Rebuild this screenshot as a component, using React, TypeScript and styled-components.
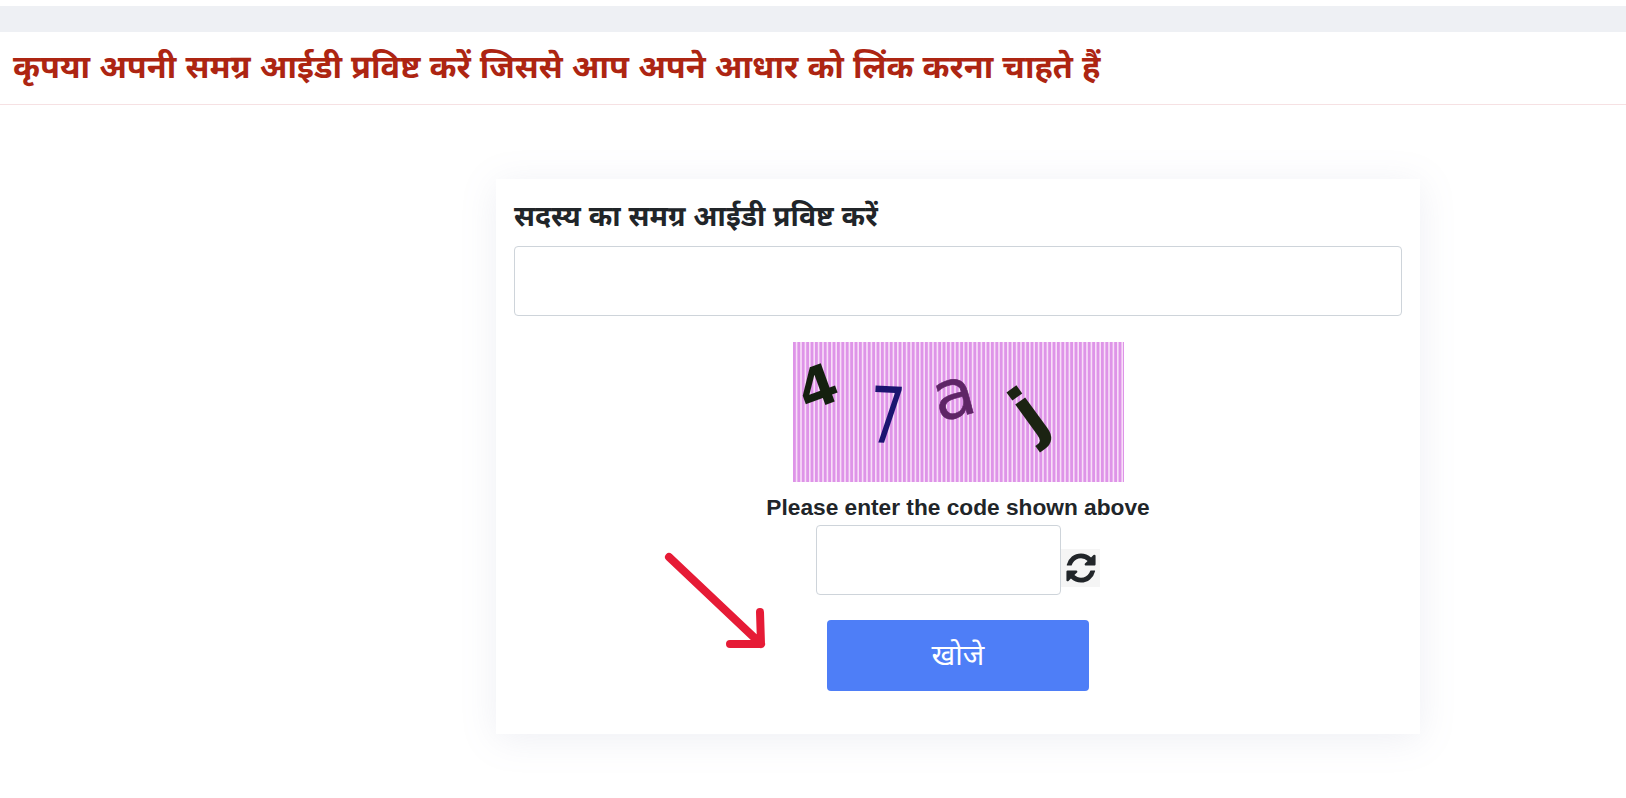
import React from 'react';
import styled, { createGlobalStyle } from 'styled-components';

const GlobalStyle = createGlobalStyle`
  html, body {
    margin: 0;
    padding: 0;
    background: #ffffff;
    font-family: "Liberation Sans", Arial, sans-serif;
  }
  * { box-sizing: border-box; }
`;

const hindi = `"Liberation Sans", "Noto Sans Devanagari", "Lohit Devanagari", "Noto Sans", sans-serif`;

const Page = styled.div`
  width: 1626px;
  height: 798px;
  overflow: hidden;
  padding-top: 6px;
`;

const TopBand = styled.div`
  height: 26px;
  background: #eef0f4;
`;

const TitleBar = styled.div`
  height: 73px;
  padding: 14px 13px 0;
  border-bottom: 1px solid #f6e1e3;
`;

const Title = styled.h1`
  margin: 0;
  font-family: ${hindi};
  font-size: 32.5px;
  line-height: 42px;
  font-weight: 700;
  color: #ad2512;
`;

const Card = styled.div`
  width: 924px;
  height: 555px;
  margin: 74px 0 0 496px;
  padding: 19px 18px 0;
  background: #fff;
  box-shadow: 0 5px 35px rgba(120, 130, 170, 0.13);
  display: flex;
  flex-direction: column;
`;

const FieldLabel = styled.label`
  font-family: ${hindi};
  font-size: 28.4px;
  line-height: 36px;
  font-weight: 700;
  color: #212529;
  margin-bottom: 12px;
`;

const TextBox = styled.input<{ $width?: number }>`
  display: block;
  width: ${(p) => (p.$width ? `${p.$width}px` : '100%')};
  height: 70px;
  border: 1px solid #ced4da;
  border-radius: 4px;
  background: #fff;
  outline: none;
`;

const CaptchaArea = styled.div`
  margin-top: 26px;
  display: flex;
  flex-direction: column;
  align-items: center;
`;

const CaptchaImage = styled.svg`
  display: block;
  width: 331px;
  height: 140px;
`;

const CaptchaHint = styled.div`
  margin-top: 12px;
  font-size: 22.7px;
  line-height: 26px;
  font-weight: 700;
  color: #212529;
`;

const CaptchaRow = styled.div`
  display: flex;
  align-items: flex-end;
  margin-top: 5px;
`;

const RefreshButton = styled.div`
  width: 39px;
  height: 38px;
  margin-bottom: 8px;
  background: #f5f5f5;
  display: flex;
  align-items: center;
  justify-content: center;
  color: #212529;
`;

const ButtonRow = styled.div`
  position: relative;
  margin-top: 25px;
  display: flex;
  justify-content: center;
`;

const SearchButton = styled.button`
  width: 262px;
  height: 71px;
  padding: 5px 0 0;
  border: 0;
  border-radius: 4px;
  background: #4e7ef7;
  color: #fff;
  font-family: ${hindi};
  font-size: 29px;
`;

const Arrow = styled.svg`
  position: absolute;
  left: 146px;
  top: -70px;
  width: 110px;
  height: 110px;
`;

const RefreshIcon = () => (
  <svg width="34" height="34" viewBox="0 0 1792 1792" fill="currentColor">
    <path d="M1639 1056q0 5-1 7-64 268-268 434.5t-478 166.5q-146 0-282.5-55t-243.5-157l-129 129q-19 19-45 19t-45-19-19-45v-448q0-26 19-45t45-19h448q26 0 45 19t19 45-19 45l-137 137q71 66 161 102t187 36q134 0 250-65t186-179q11-17 53-117 8-23 30-23h192q13 0 22.5 9.5t9.5 22.5zm25-800v448q0 26-19 45t-45 19h-448q-26 0-45-19t-19-45 19-45l138-138q-148-137-349-137-134 0-250 65t-186 179q-11 17-53 117-8 23-30 23h-199q-13 0-22.5-9.5t-9.5-22.5v-7q65-268 270-434.5t480-166.5q146 0 284 55.5t245 156.5l130-129q19-19 45-19t45 19 19 45z" />
  </svg>
);

export default function App() {
  const stripes = Array.from({ length: 76 }, (_, i) => i * 4.4);
  return (
    <Page>
      <GlobalStyle />
      <TopBand />
      <TitleBar>
        <Title>कृपया अपनी समग्र आईडी प्रविष्ट करें जिससे आप अपने आधार को लिंक करना चाहते हैं</Title>
      </TitleBar>
      <Card>
        <FieldLabel>सदस्य का समग्र आईडी प्रविष्ट करें</FieldLabel>
        <TextBox />
        <CaptchaArea>
          <CaptchaImage viewBox="0 0 331 140">
            <rect width="331" height="140" fill="#f8def8" />
            {stripes.map((x) => (
              <rect key={x} x={x} width="2.8" height="140" fill="#de94e8" />
            ))}
            <text fontFamily="DejaVu Sans" fontWeight="700" fontSize="56" fill="#14200f" transform="translate(13 70) rotate(-20)">4</text>
            <text fontFamily="DejaVu Sans" fontSize="78" fill="#1b1470" transform="translate(75 100) rotate(3) scale(0.72 1)">7</text>
            <text fontFamily="DejaVu Sans" fontSize="68" stroke="#5e2566" strokeWidth="0.6" fill="#5e2566" transform="translate(146 80) rotate(-15)">a</text>
            <text fontFamily="DejaVu Sans" fontWeight="700" fontSize="70" fill="#1b2312" transform="translate(240 97) rotate(-36)">j</text>
          </CaptchaImage>
          <CaptchaHint>Please enter the code shown above</CaptchaHint>
          <CaptchaRow>
            <TextBox $width={245} />
            <RefreshButton>
              <RefreshIcon />
            </RefreshButton>
          </CaptchaRow>
        </CaptchaArea>
        <ButtonRow>
          <Arrow viewBox="0 0 110 110">
            <path d="M9 7 L101 94 M100 62 L101 94 L70 94" fill="none" stroke="#e61b36" strokeWidth="8" strokeLinecap="round" strokeLinejoin="round" />
          </Arrow>
          <SearchButton>खोजे</SearchButton>
        </ButtonRow>
      </Card>
    </Page>
  );
}
